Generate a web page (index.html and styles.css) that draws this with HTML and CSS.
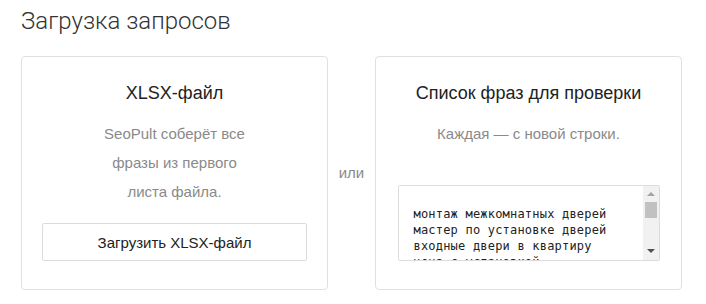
FILE: index.html
```html
<!DOCTYPE html>
<html lang="ru">
<head>
<meta charset="utf-8">
<title>Загрузка запросов</title>
<link rel="stylesheet" href="styles.css">
</head>
<body>
<main class="page">
  <h1 class="page-title">Загрузка запросов</h1>
  <div class="options">
    <section class="card">
      <h2 class="card-title">XLSX-файл</h2>
      <p class="card-text card-text--narrow">SeoPult соберёт все фразы из первого листа файла.</p>
      <button class="btn" type="button">Загрузить XLSX-файл</button>
    </section>
    <div class="or">или</div>
    <section class="card">
      <h2 class="card-title">Список фраз для проверки</h2>
      <p class="card-text">Каждая — с новой строки.</p>
      <div class="phrases">
        <textarea class="phrases-input" spellcheck="false">монтаж межкомнатных дверей
мастер по установке дверей
входные двери в квартиру
цена с установкой</textarea>
        <div class="scrollbar">
          <span class="sb-arrow sb-arrow--up"></span>
          <span class="sb-thumb"></span>
          <span class="sb-fill"></span>
          <span class="sb-arrow sb-arrow--down"></span>
        </div>
      </div>
    </section>
  </div>
</main>
</body>
</html>
```
FILE: styles.css
```css
* { box-sizing: border-box; }
html, body { margin: 0; padding: 0; background: #fff; }
body { font-family: "Liberation Sans", Arial, sans-serif; color: #222; }

.page { padding: 7px 24px 0 21px; }

.page-title {
  margin: 0;
  font-family: Roboto, "Liberation Sans", sans-serif;
  font-weight: 300;
  font-size: 24px;
  line-height: 28px;
  color: #333;
}

.options {
  margin-top: 21px;
  display: grid;
  grid-template-columns: 307px 47px 307px;
}

.card {
  border: 1px solid #e0e0e0;
  border-radius: 4px;
  padding: 24px 20px 28px;
  display: flex;
  flex-direction: column;
  align-items: center;
  text-align: center;
}

.card-title {
  margin: 0;
  font-size: 18px;
  font-weight: 400;
  line-height: 24px;
  color: #222;
}

.card-text {
  margin: 14px 0 0;
  font-size: 15px;
  line-height: 29px;
  color: #8a8a8a;
}
.card-text--narrow { max-width: 160px; }

.btn {
  margin-top: 17px;
  width: 265px;
  height: 38px;
  background: #fff;
  border: 1px solid #dcdcdc;
  border-radius: 2px;
  font-family: "Liberation Sans", Arial, sans-serif;
  font-size: 15px;
  color: #222;
  padding: 0;
}

.or {
  align-self: center;
  text-align: center;
  font-size: 15px;
  color: #8a8a8a;
  padding-bottom: 2px;
}

.phrases {
  margin-top: auto;
  width: 262px;
  height: 76px;
  border: 1px solid #dcdcdc;
  border-radius: 2px;
  display: flex;
  overflow: hidden;
}

.phrases-input {
  flex: 1;
  min-width: 0;
  border: 0;
  outline: none;
  resize: none;
  overflow: hidden;
  margin: 0;
  padding: 20px 0 0 15px;
  font-family: "DejaVu Sans Mono", monospace;
  font-size: 12px;
  line-height: 16px;
  letter-spacing: 0.2px;
  color: #222;
  background: #fff;
}

.scrollbar {
  width: 16px;
  background: #f1f1f1;
  display: flex;
  flex-direction: column;
  align-items: center;
}

.sb-arrow {
  width: 0;
  height: 0;
  border-left: 4px solid transparent;
  border-right: 4px solid transparent;
}
.sb-arrow--up { margin-top: 6px; border-bottom: 4px solid #a3a3a3; }
.sb-arrow--down { margin-bottom: 7px; border-top: 4px solid #505050; }

.sb-thumb {
  margin-top: 6px;
  width: 12px;
  height: 16px;
  background: #c1c1c1;
}
.sb-fill { flex: 1; }
```
